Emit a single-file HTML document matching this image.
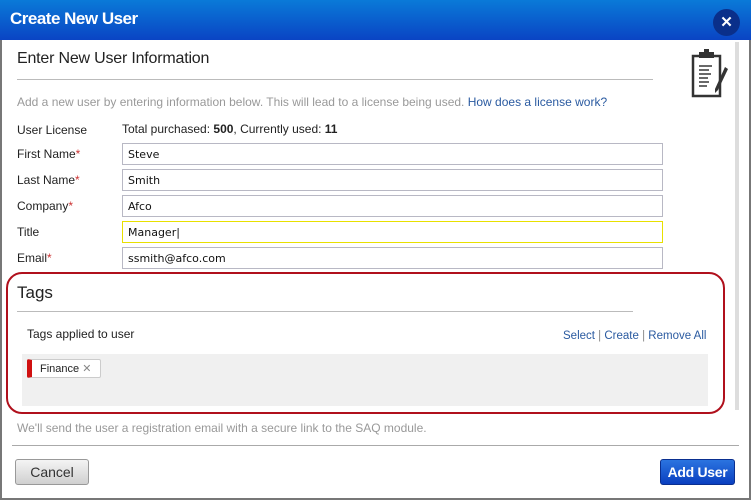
<!DOCTYPE html>
<html><head><style>
*{margin:0;padding:0;box-sizing:border-box}
body{width:751px;height:500px;overflow:hidden;background:#fff;font-family:"Liberation Sans",Arial,sans-serif;position:relative}
.a{position:absolute}
.frame{left:0;top:0;width:751px;height:500px;border:2px solid #777;border-top:none}
.title{left:0;top:0;width:751px;height:40px;background:linear-gradient(#0a7ad8,#0a44c4);color:#fff;font-weight:bold;font-size:17px;padding:9px 0 0 10px;letter-spacing:-0.5px}
.close{left:713px;top:9px;width:27px;height:27px;border-radius:50%;background:#0a2f8a;color:#fff;font-weight:bold;font-size:15px;text-align:center;line-height:27px}
.lbl{font-size:12px;color:#222}
.star{color:#c33}
.inp{left:122px;width:541px;height:22px;border:1px solid #b8b8c4;font-family:"DejaVu Sans",sans-serif;font-size:11px;padding:4px 0 0 5px;color:#111;background:#fff}
.lnk{color:#2a5aa0}
.btn{font-weight:bold;font-size:14px;text-align:center;border-radius:3px}
</style></head><body>
<div class="a frame"></div>
<div class="a title">Create New User</div>
<div class="a close">✕</div>
<div class="a" style="left:735px;top:42px;width:4px;height:368px;background:#ddd"></div>
<div class="a" style="left:17px;top:50px;font-size:16px;color:#222;letter-spacing:-0.2px">Enter New User Information</div>
<div class="a" style="left:17px;top:79px;width:636px;height:1px;background:#bbb"></div>
<svg class="a" style="left:688px;top:48px" width="42" height="52" viewBox="0 0 40 52">
<rect x="4" y="8" width="27" height="40" fill="none" stroke="#333" stroke-width="2.5"/>
<rect x="10" y="4" width="15" height="6" fill="#333"/><rect x="15" y="1" width="5" height="4" fill="#333"/>
<g stroke="#444" stroke-width="1.6"><line x1="10" y1="18" x2="23" y2="18"/><line x1="10" y1="22" x2="20" y2="22"/><line x1="10" y1="26" x2="22" y2="26"/><line x1="10" y1="30" x2="19" y2="30"/><line x1="10" y1="34" x2="20" y2="34"/><line x1="10" y1="38" x2="18" y2="38"/></g>
<path d="M36 19 L39 21 L29 42 L26 45 L26 41 Z" fill="#333"/>
</svg>
<div class="a" style="left:17px;top:95px;font-size:12px;color:#999">Add a new user by entering information below. This will lead to a license being used. <span class="lnk">How does a license work?</span></div>
<div class="a lbl" style="left:17px;top:123px">User License</div>
<div class="a lbl" style="left:122px;top:122px">Total purchased: <b>500</b>, Currently used: <b>11</b></div>
<div class="a lbl" style="left:17px;top:147px">First Name<span class="star">*</span></div>
<div class="a inp" style="top:143px">Steve</div>
<div class="a lbl" style="left:17px;top:173px">Last Name<span class="star">*</span></div>
<div class="a inp" style="top:169px">Smith</div>
<div class="a lbl" style="left:17px;top:199px">Company<span class="star">*</span></div>
<div class="a inp" style="top:195px">Afco</div>
<div class="a lbl" style="left:17px;top:225px">Title</div>
<div class="a inp" style="top:221px;border-color:#e8e000">Manager|</div>
<div class="a lbl" style="left:17px;top:251px">Email<span class="star">*</span></div>
<div class="a inp" style="top:247px">ssmith@afco.com</div>
<div class="a" style="left:6px;top:272px;width:719px;height:142px;border:2.5px solid #b0101c;border-radius:16px"></div>
<div class="a" style="left:17px;top:283px;font-size:17px;color:#222">Tags</div>
<div class="a" style="left:17px;top:311px;width:616px;height:1px;background:#bbb"></div>
<div class="a lbl" style="left:27px;top:327px">Tags applied to user</div>
<div class="a" style="left:563px;top:330px;font-size:11.5px;color:#2a5aa0">Select <span style="color:#888">|</span> Create <span style="color:#888">|</span> Remove All</div>
<div class="a" style="left:22px;top:354px;width:686px;height:52px;background:#f0f0f0"></div>
<div class="a" style="left:27px;top:359px;width:74px;height:19px;background:#fff;border:1px solid #ccc;border-left:5px solid #d01010;border-radius:2px;font-size:11px;color:#222;padding:2px 0 0 8px">Finance <span style="color:#888">✕</span></div>
<div class="a" style="left:17px;top:421px;font-size:12px;color:#999">We'll send the user a registration email with a secure link to the SAQ module.</div>
<div class="a" style="left:12px;top:445px;width:727px;height:1px;background:#aaa"></div>
<div class="a btn" style="left:15px;top:459px;width:74px;height:26px;background:linear-gradient(#f4f4f4,#d0d0d0);border:1px solid #999;color:#333;line-height:24px;font-weight:normal">Cancel</div>
<div class="a btn" style="left:660px;top:459px;width:75px;height:26px;background:linear-gradient(#2b74e0,#0a3fc0);border:1px solid #0a2f90;color:#fff;line-height:24px;letter-spacing:-0.3px">Add User</div>
</body></html>
